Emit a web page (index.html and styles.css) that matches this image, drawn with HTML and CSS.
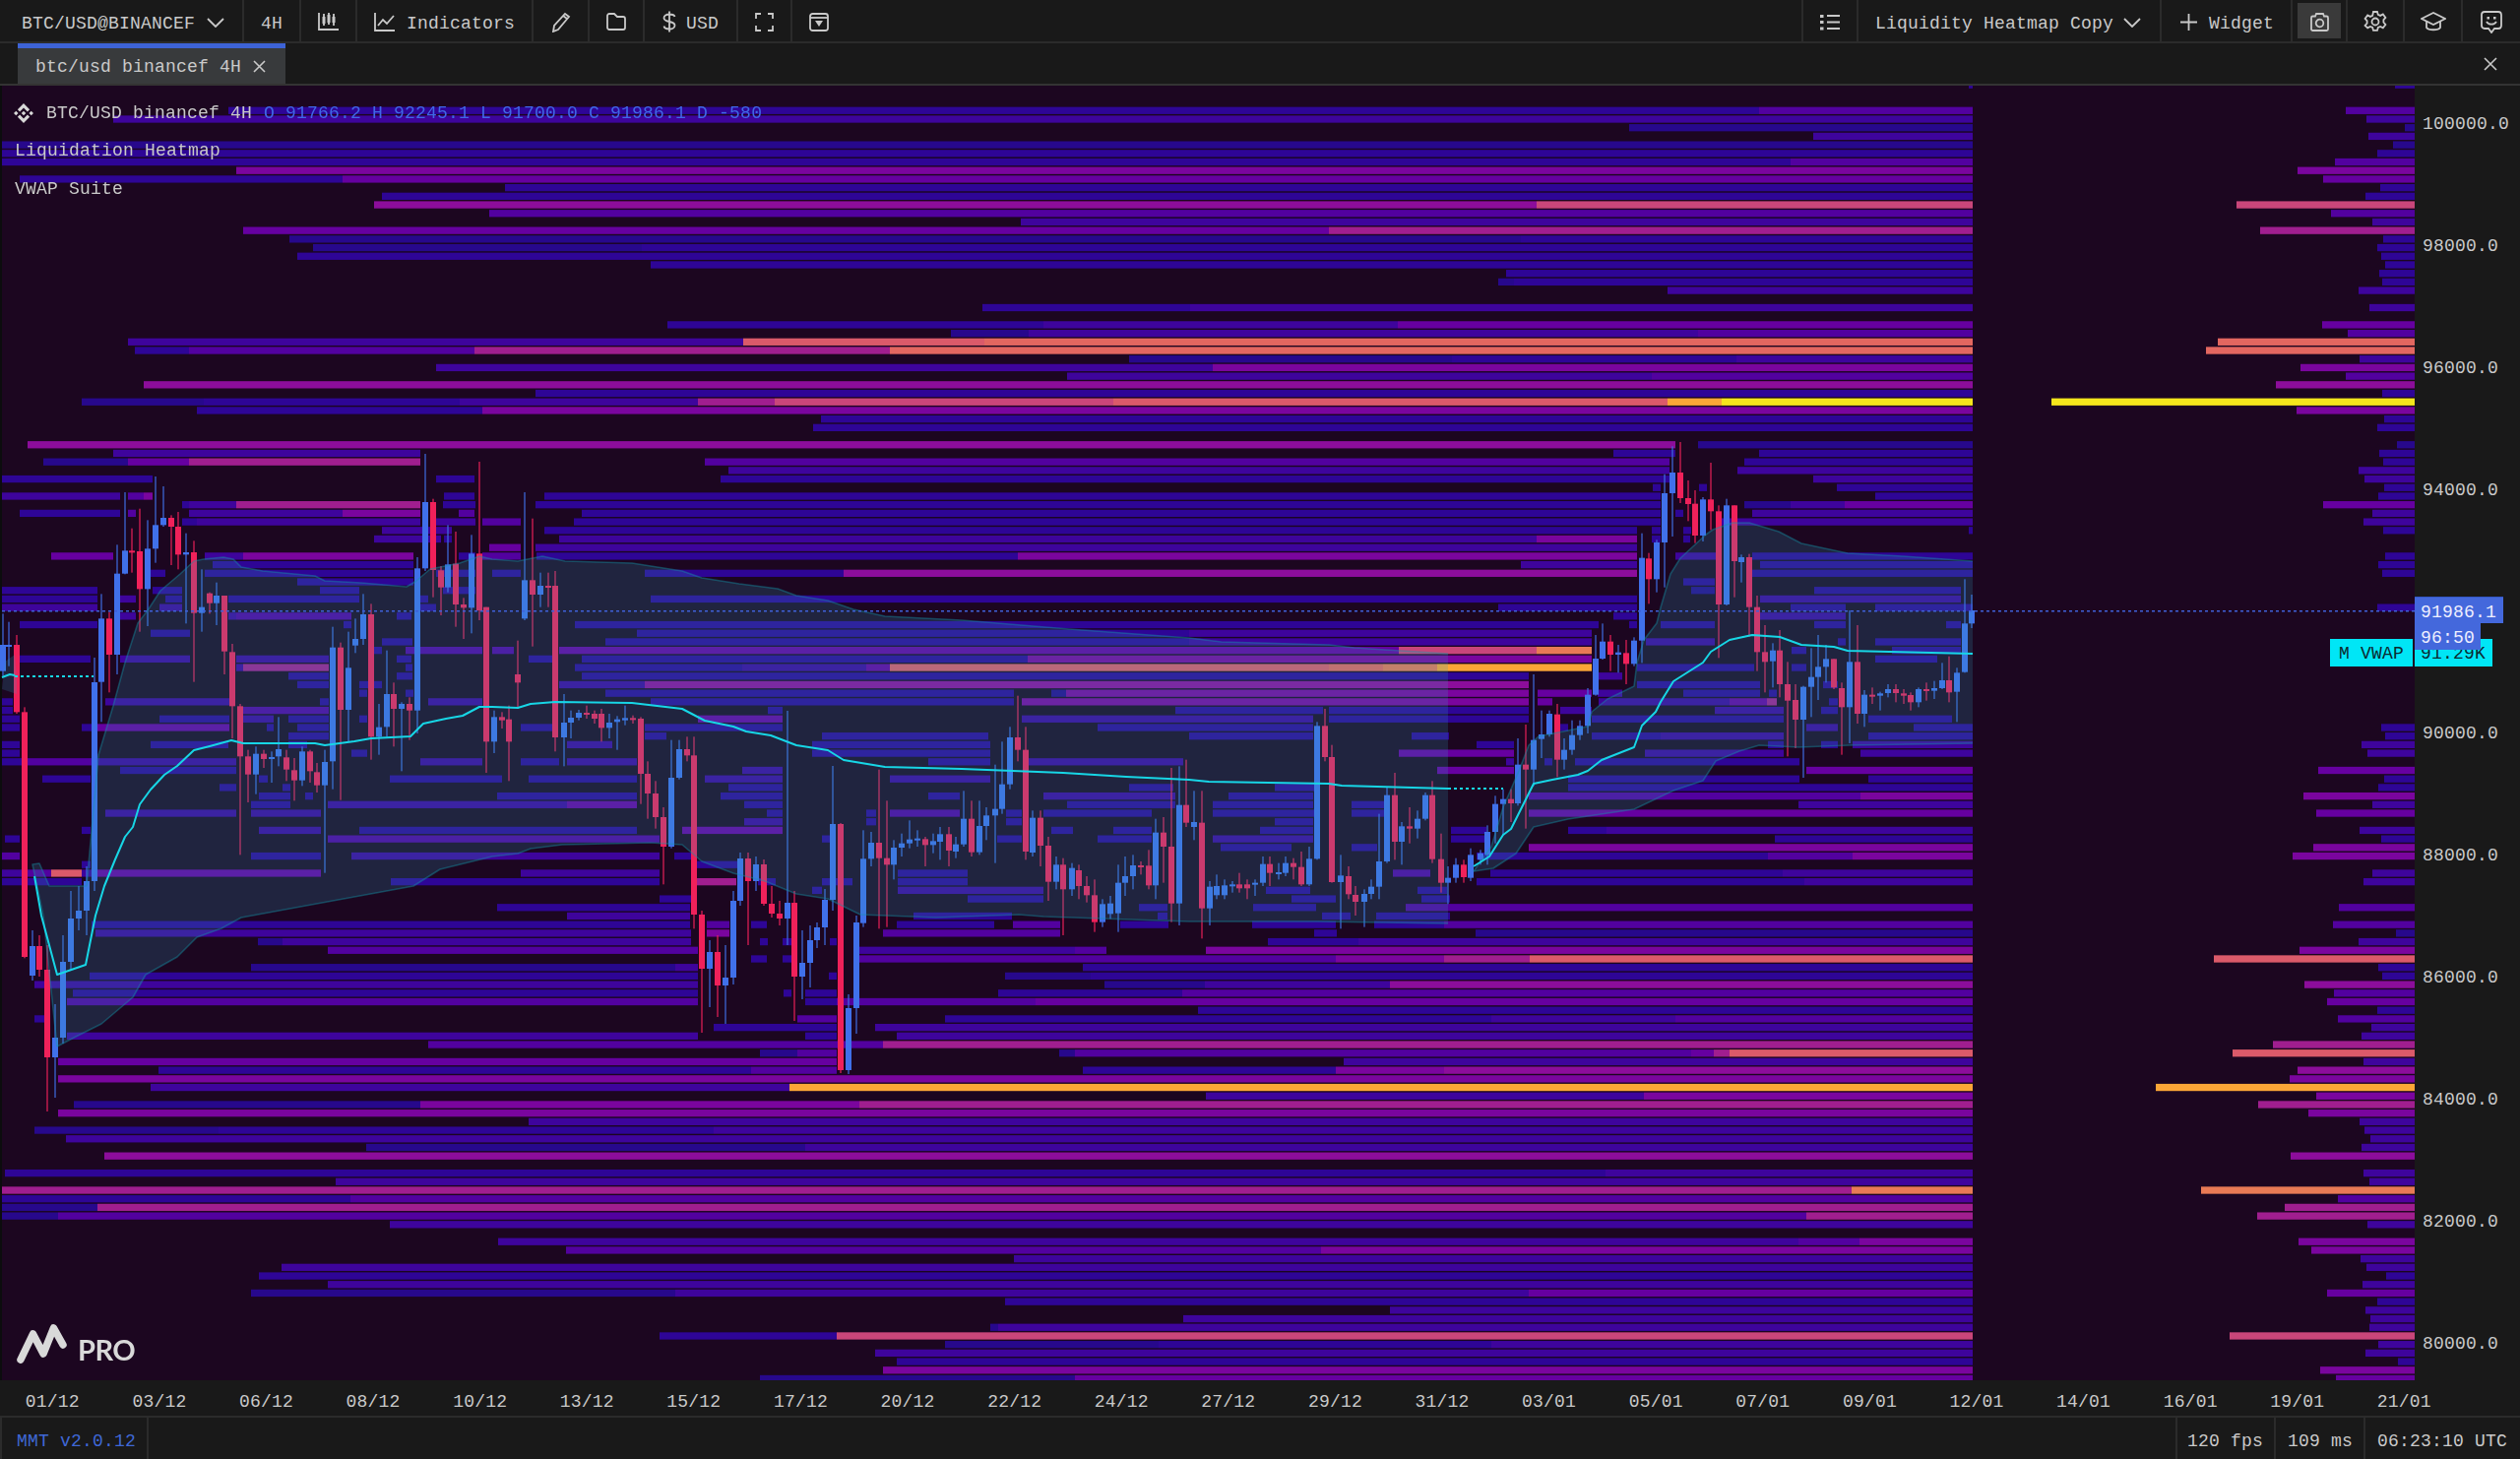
FILE: index.html
```html
<!DOCTYPE html>
<html lang="en">
<head>
<meta charset="utf-8">
<title>BTC/USD Liquidity Heatmap</title>
<link rel="stylesheet" href="styles.css">
</head>
<body>
<div class="app">
  <header class="toolbar">
    <div class="tb-item w-symbol pad-symbol"><span>BTC/USD@BINANCEF</span>
      <svg class="chev" viewBox="0 0 18 10"><path d="M1 1l8 8 8-8"/></svg></div>
    <div class="tb-item w-tf center"><span>4H</span></div>
    <div class="tb-item w-type center">
      <svg class="ico" width="22" height="20" viewBox="0 0 22 20"><path d="M1 1v17h20"/><path d="M6 2v12M11 1v12M16 2v12"/><path class="solid" d="M4.500 5h3v7h-3zM9.500 3h3v8h-3zM14.500 5h3v6h-3z"/></svg></div>
    <div class="tb-item w-ind pad-ind">
      <svg class="ico" width="22" height="20" viewBox="0 0 22 20"><path d="M1 1v18h20"/><path d="M4 14l5-6 4 4 7-8"/></svg><span>Indicators</span></div>
    <div class="tb-item w-tool center">
      <svg class="ico" width="20" height="21" viewBox="0 0 20 21"><path d="M14 2l4 3L7 18l-5 2 1-6z"/><path d="M12 4l4 3"/></svg></div>
    <div class="tb-item w-tool-b center">
      <svg class="ico" width="22" height="18" viewBox="0 0 22 18"><path d="M2 3a2 2 0 0 1 2-2h5l3 3h6a2 2 0 0 1 2 2v9a2 2 0 0 1-2 2H4a2 2 0 0 1-2-2z"/></svg></div>
    <div class="tb-item w-usd pad-usd">
      <svg class="ico" width="14" height="22" viewBox="0 0 14 22"><path d="M12.500 6C12 4 10 3.500 7 3.500 4 3.500 1.500 5 1.500 7.200c0 5.300 11 2.300 11 7.500 0 2.300-2.500 3.800-5.500 3.800S1.800 17.500 1.500 15.500M7 .5v21"/></svg><span>USD</span></div>
    <div class="tb-item w-full center">
      <svg class="ico" width="19" height="19" viewBox="0 0 19 19"><path d="M1 6V1h5M13 1h5v5M18 13v5h-5M6 18H1v-5"/></svg></div>
    <div class="tb-item w-save center no-border">
      <svg class="ico" width="20" height="19" viewBox="0 0 20 19"><rect x="1" y="1" width="18" height="17" rx="2.500"/><path d="M1 5h18"/><path class="solid" d="M6 8h8l-4 6z"/></svg></div>
    <div class="spacer"></div>
    <div class="tb-item w-list center border-left">
      <svg class="ico" width="22" height="17" viewBox="0 0 22 17"><path d="M8 2h13M8 8.500h13M8 15h13"/><path class="solid" d="M1 1h3.500v3H1zM1 7h3.500v3H1zM1 13.500h3.500v3H1z"/></svg></div>
    <div class="tb-item w-layout pad-layout"><span>Liquidity Heatmap Copy</span>
      <svg class="chev" viewBox="0 0 18 10"><path d="M1 1l8 8 8-8"/></svg></div>
    <div class="tb-item w-widget pad-widget">
      <svg class="ico" width="19" height="19" viewBox="0 0 19 19"><path d="M9.500 1v17M1 9.500h17"/></svg><span>Widget</span></div>
    <div class="tb-item w-cam center"><div class="cam-bg">
      <svg class="ico" width="21" height="19" viewBox="0 0 21 19"><path d="M2 5a1.500 1.500 0 0 1 1.500-1.500H6L7 1h7l1 2.500h2.500A1.500 1.500 0 0 1 19 5v11.500a1.500 1.500 0 0 1-1.500 1.500h-14A1.500 1.500 0 0 1 2 16.500z"/><circle cx="10.500" cy="10.500" r="3.800"/></svg></div></div>
    <div class="tb-item w-icon center">
      <svg class="ico" width="24" height="24" viewBox="0 0 24 24"><path d="M10 2h4l.8 2.900 2.300 1 2.700-1.400 2.600 3.400-2 2.200v2.600l2 2.300-2.600 3.400-2.700-1.400-2.300 1-.8 2.900h-4l-.8-2.900-2.300-1-2.700 1.400L1.600 16l2-2.300v-2.600l-2-2.200L4.200 5.500l2.700 1.400 2.300-1z"/><circle cx="12" cy="12" r="3.500"/></svg></div>
    <div class="tb-item w-icon-b center">
      <svg class="ico" width="26" height="21" viewBox="0 0 26 21"><path d="M1 7l12-6 12 6-12 6z"/><path d="M6 9.500V16c2 3 12 3 14 0V9.500"/></svg></div>
    <div class="tb-item w-icon-c center no-border">
      <svg class="ico" width="24" height="23" viewBox="0 0 24 23"><path d="M5 1h14a3 3 0 0 1 3 3v11a3 3 0 0 1-3 3h-4l-3 4-3-4H5a3 3 0 0 1-3-3V4a3 3 0 0 1 3-3z"/><path d="M7 11c2 3.500 8 3.500 10 0"/><path class="solid" d="M7.500 6h2.500v2.500H7.500zM14 6h2.500v2.500H14z"/></svg></div>
  </header>

  <nav class="tabs">
    <div class="tab"><span>btc/usd binancef 4H</span>
      <svg class="ico-x" width="13" height="13" viewBox="0 0 13 13"><path d="M1 1l11 11M12 1L1 12"/></svg></div>
    <div class="spacer"></div>
    <svg class="ico-x close-all" width="14" height="14" viewBox="0 0 14 14"><path d="M1 1l12 12M13 1L1 13"/></svg>
  </nav>

  <main class="main">
    <div class="plot">
      <canvas id="chart" class="chart-canvas" width="2453" height="1315"></canvas>
      <div class="legend">
        <div class="legend-row">
          <svg class="binance" width="20" height="20" viewBox="0 0 126.610 126.610"><path d="M38.730 53.200L63.300 28.630 87.890 53.220l14.310-14.300L63.300 0 24.420 38.900zM0 63.310L14.300 49l14.300 14.310L14.300 77.600zM38.730 73.410L63.300 97.970l24.590-24.580 14.310 14.290L63.300 126.600 24.420 87.700zM98 63.310L112.300 49l14.300 14.300-14.300 14.300zM77.830 63.300L63.300 48.760 48.760 63.300 63.300 77.840z"/></svg>
          <span>BTC/USD binancef 4H</span>
          <span class="ohlc">O 91766.2 H 92245.1 L 91700.0 C 91986.1 D -580</span>
        </div>
        <div class="legend-line">Liquidation Heatmap</div>
        <div class="legend-line">VWAP Suite</div>
      </div>
      <div class="brand">
        <svg width="56" height="44" viewBox="0 0 56 44"><path d="M4 37L16.500 11 27 31 37.500 5 47 22"/></svg>
        <span>PRO</span>
      </div>
      <div class="vwap-tag">M VWAP</div>
    </div>
    <aside class="price-axis">
      <div class="price-list">
        <div class="price">100000.0</div><div class="price">98000.0</div><div class="price">96000.0</div>
        <div class="price">94000.0</div><div class="price">92000.0</div><div class="price">90000.0</div>
        <div class="price">88000.0</div><div class="price">86000.0</div><div class="price">84000.0</div>
        <div class="price">82000.0</div><div class="price">80000.0</div>
      </div>
      <div class="tag-vwap-value">91.29K</div>
      <div class="tag-last">91986.1</div>
      <div class="tag-timer">96:50</div>
    </aside>
  </main>

  <div class="time-axis">
    <span>01/12</span><span>03/12</span><span>06/12</span><span>08/12</span><span>10/12</span><span>13/12</span>
    <span>15/12</span><span>17/12</span><span>20/12</span><span>22/12</span><span>24/12</span><span>27/12</span>
    <span>29/12</span><span>31/12</span><span>03/01</span><span>05/01</span><span>07/01</span><span>09/01</span>
    <span>12/01</span><span>14/01</span><span>16/01</span><span>19/01</span><span>21/01</span>
  </div>

  <footer class="status">
    <div class="st-item st-version">MMT v2.0.12</div>
    <div class="spacer"></div>
    <div class="st-item st-fps">120 fps</div>
    <div class="st-item st-ms">109 ms</div>
    <div class="st-item st-clock">06:23:10 UTC</div>
  </footer>
</div>
<script src="chart.js"></script>
</body>
</html>
```
FILE: styles.css
```css
* { box-sizing: border-box; }
html, body { margin: 0; padding: 0; background: #191919; }
body {
  font-family: "Liberation Mono", "DejaVu Sans Mono", monospace;
  font-size: 18px;
  letter-spacing: .2px;
  color: #c9c9c9;
}
.app { width: 2560px; height: 1482px; display: flex; flex-direction: column; overflow: hidden; }
.spacer { flex: 1 1 auto; }

/* top bar */
.toolbar { height: 44px; flex: none; display: flex; background: #191919; border-bottom: 2px solid #2b2b2b; }
.tb-item { height: 100%; display: flex; align-items: center; border-right: 2px solid #2b2b2b; flex: none; }
.tb-item span { position: relative; top: 3px; }
.center { justify-content: center; }
.no-border { border-right: 0; }
.border-left { border-left: 2px solid #2b2b2b; }
.w-symbol { width: 248px; } .pad-symbol { padding-left: 22px; gap: 12px; }
.w-tf { width: 58px; }
.w-type { width: 57px; }
.w-ind { width: 179px; } .pad-ind { padding-left: 17px; gap: 11px; }
.w-tool { width: 57px; }
.w-tool-b { width: 56px; }
.w-usd { width: 95px; } .pad-usd { padding-left: 18px; gap: 10px; }
.w-full { width: 55px; }
.w-save { width: 54px; }
.w-list { width: 58px; }
.w-layout { width: 308px; } .pad-layout { padding-left: 17px; gap: 10px; }
.w-widget { width: 133px; } .pad-widget { padding-left: 18px; gap: 11px; }
.w-cam { width: 56px; }
.w-icon { width: 58px; }
.w-icon-b { width: 59px; }
.w-icon-c { width: 58px; }
.chev { width: 18px; height: 10px; fill: none; stroke: #c9c9c9; stroke-width: 1.800; position: relative; top: 2px; }
.ico { fill: none; stroke: #c9c9c9; stroke-width: 1.800; flex: none; position: relative; top: 1px; }
.ico .solid { fill: #c9c9c9; stroke: none; }
.cam-bg { width: 44px; height: 36px; background: #3a3a3a; display: flex; align-items: center; justify-content: center; }

/* tab strip */
.tabs { height: 43px; flex: none; display: flex; align-items: stretch; background: #191919; border-bottom: 2px solid #333; padding-left: 18px; }
.tab { width: 272px; background: #383a3c; border-top: 5px solid #3d63d6; display: flex; align-items: center; padding-left: 18px; gap: 12px; font-size: 18px; }
.tab span { position: relative; top: 1px; }
.ico-x { fill: none; stroke: #c9c9c9; stroke-width: 1.600; }
.close-all { align-self: center; margin-right: 23px; }

/* chart */
.main { flex: 1 1 auto; min-height: 0; display: flex; }
.plot { width: 2453px; height: 1315px; flex: none; position: relative; background: #1c0620; overflow: hidden; }
.chart-canvas { display: block; width: 2453px; height: 1315px; }
.legend { position: absolute; left: 14px; top: 15px; }
.legend-row { display: flex; align-items: center; height: 26px; }
.legend-row span:first-of-type { margin-left: 13px; }
.binance { fill: #d8d8d8; flex: none; }
.ohlc { color: #3f68e6; margin-left: 12px; }
.legend-line { height: 38.500px; line-height: 39.500px; margin-left: 1px; }
.legend-row + .legend-line { margin-top: 6px; }
.brand { position: absolute; left: 17px; top: 1257px; display: flex; align-items: flex-end; color: #d9d9d9; }
.brand svg { fill: none; stroke: #d9d9d9; stroke-width: 7.500; stroke-linejoin: round; stroke-linecap: round; }
.brand span { font-family: "Lato", "Noto Sans", sans-serif; font-size: 29px; font-weight: 700; letter-spacing: -.5px; margin-left: 6px; line-height: 34px; }
.vwap-tag { position: absolute; left: 2367px; top: 562px; width: 84px; height: 28px; background: #00e6f6; color: #0c2a30; text-align: center; line-height: 31px; }

.price-axis { flex: 1 1 auto; position: relative; background: #191919; overflow: hidden; }
.price-list { margin-top: -23px; padding-left: 8px; }
.price { height: 123.900px; line-height: 124.900px; }
.tag-last, .tag-timer, .tag-vwap-value { position: absolute; left: 0; height: 27px; line-height: 30px; padding-left: 6px; }
.tag-vwap-value { top: 562px; width: 79px; height: 28px; background: #00e6f6; color: #0c2a30; }
.tag-last { top: 519px; width: 90px; background: #4468dc; color: #eef; border-top: 1px solid #3458c8; }
.tag-timer { top: 546px; width: 67px; background: #4468dc; color: #eef; }

/* time axis and status */
.time-axis { height: 36px; flex: none; display: flex; align-items: center; background: #191919; margin-left: -1px; }
.time-axis span { flex: 0 0 108.600px; text-align: center; padding-top: 7px; }
.status { height: 44px; flex: none; display: flex; background: #191919; border-top: 2px solid #2b2b2b; }
.st-item { display: flex; align-items: center; height: 100%; border-right: 2px solid #2b2b2b; padding-left: 12px; padding-top: 5px; }
.st-version { width: 151px; padding-left: 15px; color: #3f68d6; border-left: 2px solid #2b2b2b; }
.st-fps { width: 102px; border-left: 2px solid #2b2b2b; padding-left: 10px; }
.st-ms { width: 91px; }
.st-clock { width: 157px; border-right: 0; }
```
FILE: chart.js
```js
// Chart drawing: liquidation heat rows, right-hand profile, candles and VWAP bands.
var PAL = [null,'#27088c','#2e0596','#3e049c','#52019f','#6600a0','#7a059e','#8c0d9b','#a01e8f','#c9467a','#db5a6a','#e36760','#e87a55','#fba637','#f5e61c'];
var RB = [0,20,34,50,78,95,115,130,150,180,200,208,217,263,369];
var X1 = 2004, AX = 2453;
var RO = {11:181,27:200,28:212,34:369,114:263,99:204,110:185,126:217,143:188,142:46,144:37,145:50,146:17,147:96,148:80,7:119,0:70,1:49,2:10,3:47,4:22,5:38,6:81,8:93,9:35,10:50,12:85};
var H = [
[-3,2000,2],[0,232,2,1787,4],[1,115,3],[2,1655,1],[3,1842,3],[4,2,1],[5,2,2],[6,2,2,1819,4],[7,240,6],[8,20,2,348,5],[9,513,2],[10,388,2],
[11,380,7,1561,9],[12,497,4],[13,1037,3],[14,247,5,1350,8],[15,294,1,1545,2],[16,318,1,652,2],[17,302,2],[18,661,2],[19,1530,2],[20,1522,1,1538,2],[21,1694,3],
[23,998,2,1209,3],[25,678,2,1060,3,1420,5],[26,966,1,1045,3,1725,4],[27,130,3,755,10,1000,11],[28,137,2,192,4,482,8,904,11],[29,1147,1,1475,2,1764,3],[30,443,3,1232,6],
[31,1084,3,1678,4],[32,146,7],[33,544,2],[34,83,1,207,2,467,3,709,8,787,9,1131,10,1694,13,1749,14],[35,200,2,490,6],[36,834,2],[37,826,2],
[39,28,7,1702],[39,1725,1],[40,115,3,427],[40,1639,2,1702],[40,1787,2],[41,44,1,130,5,192,8,427],[41,716,4,1696],[41,1772,2],[42,740,3,1696],[42,1765,3],
[43,2,2,155],[43,443,2,482],[43,732,2,1696],[43,1842,3],[44,1679,2,1687],[44,1726,2,1734],[44,1866,2],
[45,2,3,122],[45,130,4,146,6,155],[45,451,2,482],[45,553,2,1687],[45,1905,2],
[46,185,2,192,3,240,8,427],[46,450,2,483],[46,544,2,1687],[46,1772,1,1819,3,1874,5],
[47,20,2,122],[47,130,4,138],[47,192,3,348,6,427],[47,466,4,482],[47,591,2,1687],[47,1702,2,1710],[47,1780,3],
[48,185,2,200,3,427],[48,443,3,483],[48,490,4,529],[48,583,2,1687],[48,1745,3],
[49,388,3,459],[49,553,2,1663],[49,1678,2,1687],[49,1710,2,1718],[49,2000,2],
[50,380,3,448],[50,451,2,459],[50,568,3,1561,6,1663],[50,1678,2,1687],[50,1710,2,1717],
[51,497,5,529],[51,544,3,1663],
[52,52,5,115],[52,208,3,247,6,420],[52,466,2,483],[52,490,4,529],[52,545,2,1034,6,1663],[52,1702,3,1743],[52,1780,2],
[53,216,2,420],[53,1545,3,1663],[53,1788,2],
[54,153,2,168],[54,208,2,420],[54,443,2,483],[54,500,2,529],[54,655,2,857,7,1663],[54,1780,2],
[55,302,2,420],[55,1710,2,1742],
[56,2,2,99],[56,155,2,185],[56,325,2,365],[56,450,2,483],[56,1718,1,1742],[56,1843,2,1992],
[57,2,2,99],[57,122,3,138],[57,168,2,185],[57,232,2,365],[57,427,2,435],[57,661,2,1663],[57,1788,3,1992],
[58,2,3,99],[58,162,3,185],[58,427,2,443],[58,1522,2,1663],[58,1819,2,1875],[58,1905,2],
[59,122,3,138],[59,232,3,240,4,357],[59,403,2,418],[59,1639,2,1663],[59,1788,3,1875],
[60,20,2,99],[60,349,2,357],[60,584,2,1624],[60,1655,2,1663],[60,1687,2,1742],[60,1843,2,1875],[60,1977,2,1992],
[61,153,2,193],[61,647,2,1208,3,1617],
[62,388,2,419],[62,615,2,1208,3,1617],[62,1672,3,1742],[62,1867,2,1875],[62,1905,2,1992],
[63,380,2,388],[63,412,4,490],[63,500,4,522],[63,568,5,1421,9,1561,12,1617],[63,1820,2,1835],[63,1922,2,1992],
[64,20,2,92],[64,122,3,193],[64,240,3,334],[64,403,2,418],[64,537,2,561],[64,591,2,1044,6,1617],[64,1905,2,1968],
[65,240,3,247,8,334],[65,412,2,419],[65,584,2,754,3,880,5,904,10,1350,11,1405,12,1460,13,1617],[65,1663,2,1782],[65,1820,2,1835],
[66,293,2,334],[66,403,2,419],[66,591,2,1553],[66,1623,3,1648],
[67,302,2,334],[67,365,2,388],[67,568,3,655,7,1553],[67,1663,2,1788],[67,1852,2,1867],
[68,365,2,373],[68,412,2,420],[68,615,2,1030],[68,1068,1,1083,6,1553],[68,1562,5,1617],[68,1623,3,1648],[68,1710,2,1788],[68,1797,2,1805],
[69,2,2,13],[69,107,3,233],[69,325,2,334],[69,435,3,490],[69,661,2,1030],[69,1038,6,1553],[69,1562,5,1577],[69,1624,3,1757,5,1795,8,1805],[69,1858,2,1867],
[70,2,2,13],[70,247,4,334],[70,780,2,795],[70,1194,2,1344],[70,1350,2,1553],[70,1585,3,1617],[70,1742,3,1812],[70,1850,2,1867],
[71,2,2,20],[71,162,2,233],[71,247,3,278],[71,293,2,334],[71,365,2,373],[71,709,5,795],[71,1038,3,1334],[71,1350,2,1553],[71,1617,2,1812],[71,1898,2,1983],
[72,2,2,20],[72,83,2,99,5,233],[72,271,2,278],[72,302,2,334],[72,529,2,561],[72,655,2,795],[72,1115,2,1334],[72,1585,2,1593],[72,1835,3,1867],[72,1944,2],
[73,293,2,334],[73,655,2,677],[73,835,2,1004],[73,1208,2,1334],[73,1434,2,1472],[73,1617,2,1687,3,1812],[73,1898,2],
[74,2,2,20],[74,153,2,232],[74,293,2,312],[74,576,3,622],[74,825,2,1006],[74,1500,2,1538],[74,1796,2,1812],[74,1850,2,1867],[74,1882,3],
[75,2,2,20],[75,357,2,373],[75,825,2,1006],[75,1421,5,1538],[75,1671,3,1812],[75,1890,3],
[76,2,2,28,4,92,3,240],[76,427,3,490],[76,529,2,568],[76,576,3,647],[76,943,2,1006],[76,1044,3,1202],[76,1530,3,1538],[76,1569,2,1577],[76,1600,2,1828],
[77,122,2,240],[77,754,3,795],[77,1460,5,1538],[77,1835,5],
[78,43,2,92],[78,263,2,272],[78,396,2,510],[78,537,2,647],[78,716,3,795],[78,904,3,1006],[78,1593,2,1828],[78,1898,2],
[79,223,2,240],[79,287,2,295],[79,740,2,795],[79,1147,2,1192],[79,1295,2,1337],[79,1593,2],
[80,263,2,295],[80,310,2,318],[80,505,2,647],[80,732,2,795],[80,943,2,975],[80,1060,3,1194],[80,1248,2,1334],[80,1553,4,1890,6],
[81,255,2,295],[81,333,3,576,5,647],[81,756,2,795],[81,1084,2,1194],[81,1232,2,1334],[81,1373,2,1410],[81,1827,3],
[82,107,3,240],[82,255,3,326],[82,779,2,795],[82,880,2,890],[82,904,4,975],[82,1022,2,1038],[82,1060,2,1170],[82,1232,2,1337],[82,1373,2,1412],[82,1553,5],
[83,756,3,795],[83,880,2,890],[83,1022,2,1038],[83,1295,2,1334],
[84,83,2,92],[84,263,3,326],[84,365,2,647],[84,693,5,795],[84,1068,2,1090],[84,1131,2,1170],[84,1280,2,1334],[84,1474,2,1510],[84,1593,2,1632,3],
[85,5,2,20],[85,333,4,670],[85,835,2,845],[85,1013,2,1038],[85,1115,2,1170],[85,1232,3,1334],[85,1474,2,1510],[85,1803,2],
[86,1240,2,1312],[86,1373,2,1399],[86,1553,6],
[87,2,4,20],[87,255,2,326],[87,357,3,670],[87,685,2,703],[87,1500,2,1796,4,1882,6],
[88,83,2,92],[88,708,2,750],
[89,2,3,28,4,52,10,83,3,99,5,326],[89,529,3,670],[89,912,2,983],[89,1415,4,1453],[89,1514,2,1811,3],
[90,2,2,83],[90,397,2,670],[90,708,8,748],[90,770,2,788],[90,835,2,866],[90,912,2,983],[90,1500,2,1833,3],
[91,825,2,835],[91,912,3,1060],[91,1286,2,1331],[91,1440,2,1470],[92,670,2,702],[92,983,2,1060],[92,1312,2,1357],[92,1444,2,1473],
[93,505,2,701],[93,1157,2,1186],[93,1273,2,1337],[93,1428,4],[94,576,3,701],[94,928,2,1028],[94,1176,2,1186],[94,1343,2,1372],[94,1398,2,1473],
[95,93,2,701],[95,718,4,741],[95,763,2,779],[95,911,2,1010],[95,1029,4,1077],[95,1138,2,1187],[95,1272,2,1357],[95,1396,2,1467,4],
[96,97,3,702],[96,718,6,741],[96,897,4,1077],[96,1335,2,1358],[96,1499,1],
[97,262,1,287,3,702],[97,772,2,780],[97,795,2,804],[97,843,2,850],[97,1288,2,1380,3],
[98,333,4,709],[98,873,3,1092,4,1124],[98,1225,6],
[99,763,2,779],[99,795,2,804],[99,873,4,1357,6,1467,8,1554,10],
[100,255,1,686,3,709],[100,1100,2],[101,91,2,709],[101,842,2,850],[101,1021,1,1108,2],[102,35,3,709],[102,1122,1,1224,3,1412,7],
[103,74,2,709],[103,796,2,804],[103,818,2,850],[103,1014,2,1201,4],[104,68,4,709],[104,818,2,850,4,1052,5],[105,1217,2],
[106,35,2,45],[106,810,4,850],[106,960,2,1515,3,1702,4],[107,725,2,850],[107,889,3],[108,68,3,709],[108,818,2,850],[108,911,3],
[109,435,4,897,8],[110,772,1,810,4,850],[110,1076,1,1092,4,1718,5,1741,8,1757,10],[111,59,5,850],[111,1365,3],
[112,161,2,763,4,850],[112,1100,2,1357,6,1467,7],[113,59,6],[114,153,3,802,13],[115,1225,3,1670,6],[116,75,1,427,6,873,8],[117,59,6],[118,537,3],
[119,35,1,222,2,725,3],[120,67,3],[121,372,1,818,3],[122,106,7],[124,5,2,1631,3],[125,341,3],[126,2,8,1881,12],[127,2,2,356,4],[128,2,1,99,8],
[129,2,1,59,4,1835,8],[130,396,3],[132,506,3,1827,4,1889,6],[133,575,4,1342,6],[134,1030,3],[135,286,3],[136,263,2],[137,333,3],
[138,255,1,686,3,1553,5],[139,1021,2],[140,1412,3],[141,1202,3],[142,1006,1,1014,3],[143,670,2,850,9],[144,960,1,1177,2,1515,3],[145,889,3],[146,911,2],[147,897,6],[148,772,1,1092,5]
];
// x, dir (0 up/blue, 1 down/red), body top, body bottom, high, low.
var C6 = [[3,0,465,545,370,560],[9,0,465,468,395,530],[17,1,465,670,435,675],[25,1,670,1416,655,1420],
[103,0,385,578,310,700],[111,1,385,495,365,610],[119,0,248,495,160,555],[127,0,178,248,0,250],[134,1,178,181,110,245],[142,1,180,295,50,425],[150,0,172,295,85,408],[158,0,100,172,-48,215],[166,0,78,100,-18,105],[174,1,78,105,70,222],[181,1,105,190,60,235],[189,0,183,190,125,400],[197,1,183,368,148,578],[205,0,350,368,235,425],[213,1,308,338,305,370],[220,0,315,338,275,405],[228,1,315,485,315,555],[236,1,487,652,462,750],[244,1,652,805,645,1105],[252,1,805,860,785,945],[260,0,797,860,775,920],[268,1,797,813,785,840],[276,0,807,812,790,885],[283,0,783,805,685,835],[291,1,808,845,785,880],[299,1,847,878,810,940],[307,0,790,878,775,895],[315,1,790,850,785,885],[322,1,853,893,825,915],[330,0,822,893,785,1160],[338,0,473,820,410,905],[346,1,473,663,458,938],[354,0,535,663,425,760],[361,0,447,467,385,490],[369,0,372,447,310,465],[377,1,372,745,340,815],[385,0,716,745,645,800],[393,0,615,715,482,745],[400,1,615,660,580,775],[408,0,645,660,640,850],[416,1,645,665,625,755],[424,0,232,665,198,735],[432,0,30,232,-117,240],[440,1,30,237,20,320],[448,1,238,290,225,375],[455,0,220,290,100,305],[463,1,218,342,120,410],[471,1,342,352,322,447],[479,0,187,352,130,430],[487,1,187,360,-93,390],[494,1,350,760,350,855]];
var CR = [[33,0,961,991,945,996],[40,1,961,985,950,992],[48,1,985,1074,960,1129],[56,0,1054,1074,1020,1115],[64,0,977,1054,950,1060],[72,0,933,977,905,985],[80,0,925,933,900,945],[88,0,895,925,880,950],[96,0,693,895,668,905],
[713,1,929,984,925,1049],[721,0,967,984,955,1023],[729,1,967,1001,950,1033],[737,0,993,1001,960,1040],[745,0,915,993,905,1000],[752,0,872,915,866,920],[760,1,872,895,866,960],[768,0,878,895,870,905],[776,1,878,918,873,920],[784,1,918,928,900,932],[792,1,928,933,915,940],[800,0,917,933,722,960],[807,1,917,992,905,1037],[815,0,978,992,945,1015],[823,0,955,978,940,1003],[830,0,942,955,937,963],[838,0,914,942,903,960],[846,0,837,914,778,925],[854,1,837,1087,836,1090],[862,0,1024,1087,1010,1091],[870,0,937,1024,930,1050]];
var C12 = [[502,0,505,580,485,615],[510,1,505,515,490,540],[517,1,512,580,470,700],[526,1,375,400,272,480],[533,0,88,205,-180,210],[541,1,88,132,-100,290],[549,0,105,132,65,170],[557,1,105,108,65,170],[564,1,105,567,60,610],[573,0,522,567,435,655],[580,0,507,522,485,570],[588,0,492,507,483,515],[596,1,492,495,470,510],[604,1,495,510,485,525],[611,1,495,538,480,580],[619,0,522,538,495,570],[627,0,512,520,502,605],[635,0,508,515,470,530],[643,1,508,511,500,525],[651,1,510,678,505,770],[658,1,678,738,640,815],[666,1,738,810,700,845],[674,1,810,900,780,1015],[682,0,690,900,575,905],[690,0,603,690,575,695],[698,1,603,622,565,640],[705,1,622,1107,565,1150],
[877,0,937,1133,850,1145],[885,0,888,937,855,960],[893,1,888,935,665,1150],[901,1,935,955,760,1145],[908,0,903,955,880,1000],[916,0,890,903,860,930],[924,0,878,890,820,905],[932,0,875,880,850,900],[940,1,877,895,870,960],[948,0,883,895,860,920],[955,0,862,885,840,940],[964,1,862,912,840,960],[971,0,893,915,870,935],[979,0,815,893,730,900],[987,1,815,917,760,930],[995,0,837,917,760,925],[1002,0,805,837,780,880],[1011,0,785,805,650,950],[1018,0,710,785,580,800],[1026,0,567,710,535,725],[1034,1,567,605,440,640],[1042,1,605,915,535,940],[1049,0,812,918,790,930],[1057,1,812,897,790,960],[1065,1,897,1007,870,1065],[1073,0,955,1007,930,1030],[1080,1,955,1030,935,1170],[1089,0,965,1030,950,1050],[1096,1,972,1020,955,1060],[1104,1,1020,1048,990,1070],[1112,1,1048,1130,1000,1160],[1120,0,1075,1130,1060,1145],[1128,0,1073,1105,1050,1120],[1136,0,1010,1103,955,1160],[1143,0,990,1010,930,1050],[1151,0,957,990,925,1030],[1159,1,957,960,945,985],[1167,1,958,1018,910,1030],[1174,0,857,1018,815,1060],[1182,1,857,900,810,1010],[1190,1,900,1073,660,1130],[1198,0,773,1073,655,1140],[1205,1,773,827,635,840],[1213,0,825,840,730,880],[1221,1,827,1088,730,1180],[1229,0,1022,1088,1005,1140],[1236,0,1020,1048,985,1060],[1244,0,1018,1048,1000,1060],[1252,0,1015,1018,1005,1040],[1259,1,1015,1027,980,1040],[1267,1,1015,1027,1000,1060],[1275,0,1010,1015,1000,1050],[1283,0,953,1010,930,1020],[1290,1,953,980,930,1020],[1299,0,978,981,950,1000],[1306,0,950,980,930,990],[1314,1,950,962,935,1000],[1322,1,962,1015,915,1020],[1330,0,937,1015,900,1020],[1338,0,532,937,520,940],[1346,1,532,627,480,640],[1353,1,627,1008,590,1010],[1362,0,988,1008,925,1150],[1370,1,990,1045,960,1060],[1377,1,1047,1068,1020,1110],[1386,0,1044,1068,1030,1145],[1393,0,1022,1044,1000,1060],[1401,0,945,1022,800,1060],[1409,0,743,945,720,950],[1417,1,743,885,675,940],[1424,0,838,885,825,955],[1432,1,838,845,780,890],[1440,0,815,845,790,875],[1448,0,743,815,735,820],[1455,1,743,938,700,950],[1464,1,938,1010,860,1040],[1471,0,995,1010,960,1075],[1479,0,955,995,935,1010],[1487,1,955,993,940,1010],[1494,0,925,995,905,1005]];
var C7 = [[1504,0,1100,1120,1090,1135],[1511,0,1035,1105,1015,1135],[1519,0,950,1035,925,1070],[1527,0,935,950,905,1045],[1535,1,935,948,905,1005],[1542,0,830,948,750,955],[1550,1,830,845,708,1025],[1558,0,755,845,555,895],[1566,0,738,752,665,810],[1574,0,675,738,665,745],[1582,1,677,815,645,868],[1589,0,785,815,750,845],[1597,0,740,785,695,800],[1605,0,712,740,695,755],[1613,0,617,712,597,735],[1621,0,507,617,435,620],[1628,0,455,507,400,510],[1636,1,455,495,435,545],[1644,0,488,495,465,550],[1652,1,490,523,450,585],[1660,0,452,523,442,530],[1668,0,200,452,125,520],[1675,1,202,265,185,340],[1683,0,153,265,145,305],[1691,0,3,153,-55,290],[1699,0,-60,3,-140,135],[1707,1,-60,18,-153,33],[1715,1,18,36,-36,88],[1722,1,35,132,-6,155],[1730,0,22,132,15,150],[1738,1,22,58,-90,115],[1746,1,58,342,40,505],[1754,0,40,342,20,345],[1762,1,40,210,40,320],[1769,0,198,213,190,275],[1777,1,198,350,188,440],[1785,1,350,487,315,545],[1793,1,487,517,405,610],[1801,0,482,515,460,595],[1808,1,482,585,420,625],[1816,1,585,635,517,805],[1824,1,633,693,585,780],[1832,0,593,693,590,870],[1840,0,563,593,475,685],[1847,0,532,563,435,633],[1855,0,508,532,465,580],[1863,1,508,595,508,600],[1871,1,597,655,580,800],[1879,0,517,655,360,765],[1887,1,517,675,405,705],[1894,0,617,675,603,715],[1902,1,617,620,595,645],[1910,0,613,620,608,665],[1918,0,600,612,585,625],[1926,1,600,612,585,640],[1934,1,613,620,600,645],[1941,1,618,640,610,665],[1949,0,600,640,595,655],[1957,1,600,605,580,635],[1965,0,597,605,575,630],[1973,0,573,597,520,600],[1980,1,573,610,500,640],[1988,0,550,608,535,700],[1996,0,400,548,265,550],[2003,0,360,400,312,414]];

var U1 = [[58,1063],[44,930],[33,878],[40,877],[50,900],[88,900],[100,767],[115,717],[127,673],[140,633],[150,620],[163,600],[183,583],[197,570],[207,568],[227,566],[237,568],[245,576],[267,580],[320,585],[330,590],[367,592],[413,596],[423,590],[437,578],[467,572],[487,565],[500,568],[526,570],[551,565],[574,570],[642,572],[693,580],[713,587],[751,593],[790,598],[809,605],[841,610],[867,619],[899,626],[977,630],[1086,639],[1208,648],[1241,652],[1350,655],[1376,658],[1471,664]];
var L1 = [[58,1063],[77,1053],[103,1040],[135,1013],[148,990],[180,972],[200,952],[225,943],[245,932],[420,900],[447,883],[500,870],[526,867],[539,862],[571,858],[661,856],[693,858],[713,875],[745,887],[777,895],[809,908],[841,913],[874,929],[951,932],[1035,929],[1060,931],[1208,936],[1337,936],[1471,938]];
var M1 = [[35,890],[42,930],[58,990],[87,980],[97,930],[106,900],[117,873],[127,850],[135,840],[142,817],[153,802],[167,787],[180,778],[197,762],[213,758],[235,752],[247,755],[320,755],[330,757],[360,753],[377,750],[417,748],[430,735],[453,730],[470,727],[487,718],[500,718],[526,719],[539,715],[564,713],[642,714],[693,720],[716,732],[745,738],[758,743],[783,747],[809,757],[841,762],[857,772],[899,779],[977,781],[1080,785],[1144,789],[1208,792],[1228,794],[1350,796],[1363,798],[1471,801]];
var U2 = [[1497,885],[1515,860],[1527,820],[1543,783],[1553,757],[1563,748],[1613,738],[1617,723],[1633,710],[1660,697],[1663,673],[1670,650],[1683,633],[1687,617],[1697,583],[1707,567],[1733,543],[1740,538],[1760,531],[1777,531],[1807,540],[1830,552],[1877,562],[1933,565],[2004,570]];
var L2 = [[1497,885],[1517,882],[1540,867],[1558,840],[1593,832],[1660,822],[1700,803],[1730,793],[1743,773],[1767,763],[1787,757],[1827,759],[1880,757],[2004,755]];
var M2 = [[1497,880],[1513,870],[1527,848],[1535,842],[1558,796],[1577,792],[1603,787],[1613,783],[1627,772],[1660,759],[1668,737],[1682,723],[1687,713],[1700,692],[1730,673],[1738,662],[1757,650],[1780,645],[1808,647],[1830,655],[1863,657],[1877,661],[2004,664]];
var P0 = [[2,700],[5,672],[15,665],[17,690],[17,705]];

var cv = document.getElementById('chart'), g = cv.getContext('2d');
g.translate(0, -87);
g.fillStyle = '#1c0620'; g.fillRect(0, 87, 2453, 1315);

function rowY(k) { return 112.3 + 8.704 * k; }
H.forEach(function (r) {
  var k = r[0], y = rowY(k) - 3.65, n = r.length, open = n % 2 === 1, end = open ? X1 : r[n - 1], last = open ? n : n - 1;
  for (var i = 1; i < last; i += 2) {
    var x0 = r[i], x1 = i + 2 < last ? r[i + 2] : end;
    g.fillStyle = PAL[r[i + 1]];
    g.fillRect(x0, y, x1 - x0, 7.3);
  }
  if (open) {
    var c = r[n - 1], f = (k * 0.618034) % 1, w = RO[k] || Math.round(RB[c] * (0.85 + 0.3 * f));
    g.fillStyle = PAL[c];
    g.fillRect(AX - w, y, w, 7.3);
  }
});
g.fillStyle = '#0c0c0e'; g.fillRect(0, 87, 2, 1315);

function poly(pts, close) {
  g.beginPath();
  pts.forEach(function (p, i) { i ? g.lineTo(p[0], p[1]) : g.moveTo(p[0], p[1]); });
  if (close) g.closePath();
}
function candle(c, ty) {
  var x = c[0], col = c[1] ? '#f0215a' : '#4070ea';
  g.globalAlpha = 0.72; g.fillStyle = col;
  g.fillRect(x - 0.8, ty(c[4]), 1.6, ty(c[5]) - ty(c[4]));
  g.globalAlpha = 1;
  g.fillRect(x - 3, ty(c[2]), 6, Math.max(2, ty(c[3]) - ty(c[2])));
}
var t6 = function (z) { return 500 + z / 3; }, t12 = function (z) { return 560 + z / 3; }, tr = function (y) { return y; };
C6.forEach(function (c) { candle(c, t6); });
CR.forEach(function (c) { candle(c, tr); });
C12.forEach(function (c) { candle(c, t12); });
C7.forEach(function (c) { candle(c, t6); });

// The band fill washes over rows and candles alike.
g.fillStyle = 'rgba(50,160,190,.2)';
[U1.concat(L1.slice().reverse()), U2.concat(L2.slice().reverse()), P0].forEach(function (p) { poly(p, true); g.fill(); });

g.lineJoin = 'round';
g.lineWidth = 1.6; g.strokeStyle = 'rgba(20,150,170,.42)';
[U1, L1, U2, L2].forEach(function (p) { poly(p); g.stroke(); });
g.lineWidth = 2; g.strokeStyle = '#17d6e6';
[M1, M2, [[2,688],[10,685],[15,686]]].forEach(function (p) { poly(p); g.stroke(); });

g.setLineDash([3, 3]); g.lineWidth = 2; g.strokeStyle = '#17d6e6';
[[[15,687],[95,687]], [[1471,801],[1527,801]]].forEach(function (p) { poly(p); g.stroke(); });
g.strokeStyle = '#3f60d8'; g.lineWidth = 1.5;
poly([[2,620.7],[2453,620.7]]); g.stroke();
g.setLineDash([]);
```
